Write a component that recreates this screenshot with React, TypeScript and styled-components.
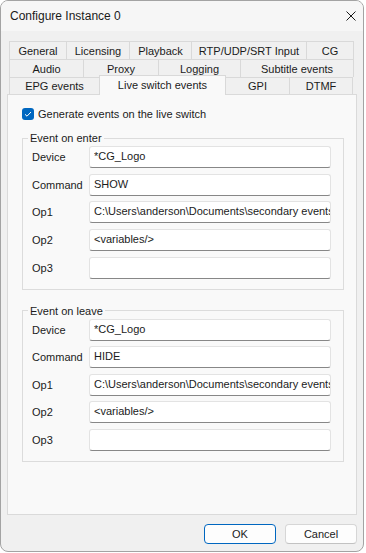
import React from "react";
import styled, { createGlobalStyle } from "styled-components";

const Global = createGlobalStyle`
  html, body { margin: 0; padding: 0; background: #ffffff; }
  body { font-family: "Liberation Sans", Arial, sans-serif; color: #1b1b1b; }
  * { box-sizing: border-box; }
`;

const Window = styled.div`
  width: 364px;
  height: 552px;
  border: 1px solid #a3a3a3;
  border-radius: 8px;
  overflow: hidden;
  background: #f0f0f0;
  display: flex;
  flex-direction: column;
`;

const TitleBar = styled.div`
  height: 30px;
  flex: none;
  display: flex;
  align-items: center;
  justify-content: space-between;
  padding-left: 9px;
  background: #f6f6f6;
`;

const Title = styled.span`
  font-size: 12px;
  color: #1a1a1a;
`;

const CloseButton = styled.div`
  width: 10px;
  height: 10px;
  margin-right: 7px;
  display: flex;
`;

const Body = styled.div`
  flex: 1;
  display: flex;
  flex-direction: column;
  padding: 10px 6px 0 6px;
  min-height: 0;
`;

const TabStrip = styled.div`
  padding-left: 2px;
  display: flex;
  flex-direction: column;
`;

const TabRow = styled.div<{ $h: number }>`
  display: flex;
  align-items: flex-end;
  height: ${(p) => p.$h}px;
`;

const Tab = styled.div<{ $w: number; $selected?: boolean }>`
  flex: none;
  width: ${(p) => p.$w}px;
  height: ${(p) => (p.$selected ? "20px" : "100%")};
  margin-right: -1px;
  margin-bottom: ${(p) => (p.$selected ? "-1px" : "0")};
  border: 1px solid #d9d9d9;
  border-bottom: none;
  background: ${(p) => (p.$selected ? "#f9f9f9" : "#f0f0f0")};
  font-size: 11px;
  display: flex;
  align-items: center;
  justify-content: center;
  padding-bottom: ${(p) => (p.$selected ? "2px" : "0")};
  white-space: nowrap;
  position: relative;
  z-index: ${(p) => (p.$selected ? 2 : 0)};
`;

const Panel = styled.div`
  flex: 1;
  border: 1px solid #dadada;
  background: #f9f9f9;
  padding: 12px 12px 0 14px;
`;

const CheckRow = styled.label`
  display: flex;
  align-items: center;
  height: 14px;
  font-size: 11px;
`;

const CheckBox = styled.span`
  width: 12px;
  height: 12px;
  border-radius: 3px;
  background: #0067c0;
  display: flex;
  align-items: center;
  justify-content: center;
  margin-right: 4px;
`;

const Group = styled.fieldset<{ $top: number }>`
  margin: ${(p) => p.$top}px 0 0 0;
  padding: 0 12px 10px 0;
  border: 1px solid #dcdcdc;
  min-width: 0;
`;

const Legend = styled.legend`
  margin-left: 5px;
  padding: 0 2px;
  font-size: 11px;
  line-height: 16px;
`;

const Rows = styled.div`
  display: flex;
  flex-direction: column;
  gap: 5.65px;
  padding-left: 9px;
`;

const Row = styled.div`
  display: grid;
  grid-template-columns: 57px 1fr;
  align-items: center;
`;

const Label = styled.span`
  font-size: 11px;
`;

const Field = styled.input`
  height: 22px;
  width: 100%;
  border: 1px solid #e3e3e3;
  border-bottom-color: #878787;
  border-radius: 3px;
  background: #ffffff;
  padding: 0 0 2px 4px;
  font-family: "Liberation Sans", Arial, sans-serif;
  font-size: 11px;
  color: #1b1b1b;
  outline: none;
`;

const ButtonBar = styled.div`
  height: 36px;
  flex: none;
  display: flex;
  justify-content: flex-end;
  align-items: flex-start;
  gap: 9px;
  padding-top: 9px;
`;

const Button = styled.button<{ $default?: boolean }>`
  width: 72px;
  height: 20px;
  border-radius: 4px;
  border: 1px solid ${(p) => (p.$default ? "#0067c0" : "#d6d6d6")};
  border-bottom-color: ${(p) => (p.$default ? "#0067c0" : "#c2c2c2")};
  background: #fdfdfd;
  font-family: "Liberation Sans", Arial, sans-serif;
  font-size: 11px;
  color: #1b1b1b;
  padding: 0;
`;

const rowsTop: [string, number][] = [
  ["General", 58],
  ["Licensing", 64],
  ["Playback", 63],
  ["RTP/UDP/SRT Input", 116],
  ["CG", 48],
];
const rowsMid: [string, number][] = [
  ["Audio", 75],
  ["Proxy", 76],
  ["Logging", 83],
  ["Subtitle events", 114],
];
const rowsBottom: [string, number][] = [
  ["EPG events", 91],
  ["Live switch events", 127],
  ["GPI", 65],
  ["DTMF", 64],
];

type Ev = { device: string; command: string; op1: string; op2: string; op3: string };

const EventGroup: React.FC<{ title: string; ev: Ev; top: number }> = ({ title, ev, top }) => (
  <Group $top={top}>
    <Legend>{title}</Legend>
    <Rows>
      <Row>
        <Label>Device</Label>
        <Field readOnly value={ev.device} />
      </Row>
      <Row>
        <Label>Command</Label>
        <Field readOnly value={ev.command} />
      </Row>
      <Row>
        <Label>Op1</Label>
        <Field readOnly value={ev.op1} />
      </Row>
      <Row>
        <Label>Op2</Label>
        <Field readOnly value={ev.op2} />
      </Row>
      <Row>
        <Label>Op3</Label>
        <Field readOnly value={ev.op3} />
      </Row>
    </Rows>
  </Group>
);

const path = "C:\\Users\\anderson\\Documents\\secondary events";

export default function App() {
  return (
    <>
      <Global />
      <Window>
        <TitleBar>
          <Title>Configure Instance 0</Title>
          <CloseButton>
            <svg width="10" height="10" viewBox="0 0 10 10">
              <path d="M0.5 0.5 L9.5 9.5 M9.5 0.5 L0.5 9.5" stroke="#1a1a1a" strokeWidth="1" fill="none" />
            </svg>
          </CloseButton>
        </TitleBar>
        <Body>
          <TabStrip>
            <TabRow $h={18}>
              {rowsTop.map(([t, w]) => (
                <Tab key={t} $w={w}>{t}</Tab>
              ))}
            </TabRow>
            <TabRow $h={18}>
              {rowsMid.map(([t, w]) => (
                <Tab key={t} $w={w}>{t}</Tab>
              ))}
            </TabRow>
            <TabRow $h={17}>
              {rowsBottom.map(([t, w]) => (
                <Tab key={t} $w={w} $selected={t === "Live switch events"}>{t}</Tab>
              ))}
            </TabRow>
          </TabStrip>
          <Panel>
            <CheckRow>
              <CheckBox>
                <svg width="12" height="12" viewBox="0 0 12 12">
                  <path d="M3 6.3 L5 8.2 L9 4" stroke="#ffffff" strokeWidth="1" fill="none" />
                </svg>
              </CheckBox>
              Generate events on the live switch
            </CheckRow>
            <EventGroup
              title="Event on enter"
              top={9}
              ev={{ device: "*CG_Logo", command: "SHOW", op1: path, op2: "<variables/>", op3: "" }}
            />
            <EventGroup
              title="Event on leave"
              top={13}
              ev={{ device: "*CG_Logo", command: "HIDE", op1: path, op2: "<variables/>", op3: "" }}
            />
          </Panel>
          <ButtonBar>
            <Button $default>OK</Button>
            <Button>Cancel</Button>
          </ButtonBar>
        </Body>
      </Window>
    </>
  );
}
